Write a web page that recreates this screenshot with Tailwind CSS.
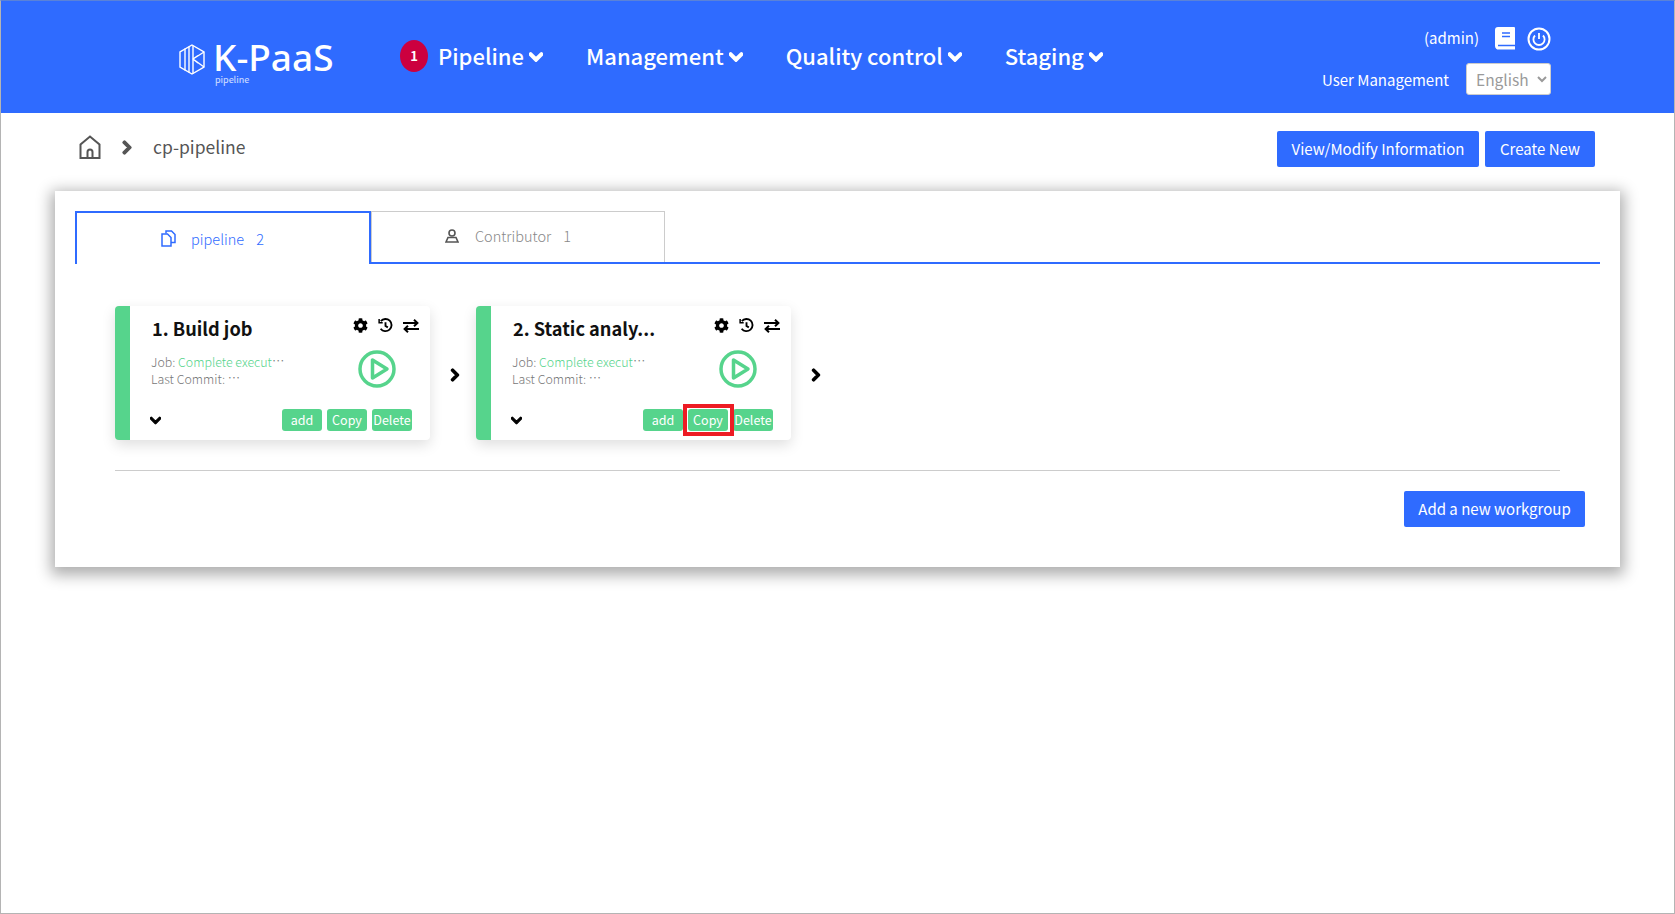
<!DOCTYPE html>
<html lang="en">
<head>
<meta charset="utf-8">
<title>K-PaaS pipeline</title>
<script src="https://cdn.jsdelivr.net/npm/@tailwindcss/browser@4"></script>
</head>
<body class="bg-white">
<div class="w-[1675px] h-[914px] border border-[#b4b4b4] border-t-[#5a82d8] bg-white overflow-hidden font-['Noto_Sans_CJK_KR','Noto_Sans',sans-serif] text-[#555]">
  <header class="h-[112px] bg-[#2f6bff] flex items-center text-white">
    <div class="w-[399px] pl-[178px] flex items-center shrink-0">
      <svg class="w-[26px] h-[31px] mt-[4px]" viewBox="0 0 26 31" fill="none" stroke="white" stroke-width="1.4"><path d="M13 1 L25 8 V23 L13 30 L1 23 V8 Z"/><path d="M6 4.5 V26.5 M10 2.5 V28.5 M14 1.5 V29.5 M14 15 L25 8 M14 15 L25 23 M19 11.5 L14 15 L19 19"/></svg>
      <div class="ml-[8px] flex flex-col mt-[10px]">
        <span class="text-[37px] leading-[36px] font-medium font-['Noto_Sans',sans-serif]">K-PaaS</span>
        <span class="text-[9px] leading-[10px] text-white/80 pl-[2px]">pipeline</span>
      </div>
    </div>
    <nav class="flex items-center text-[22px] leading-[32px] font-medium -mt-[5px]">
      <span class="w-[28px] h-[32px] rounded-[50%] bg-[#cc003f] text-[13px] font-bold flex items-center justify-center mr-[10px] mt-[2px]">1</span>
      <span class="flex items-center">Pipeline<svg class="w-[14px] h-[16px] ml-[5px] mt-[4px]" viewBox="0 0 448 512" fill="white" stroke="white" stroke-width="50"><path d="M207.029 381.476L12.686 187.132c-9.373-9.373-9.373-24.569 0-33.941l22.667-22.667c9.357-9.357 24.522-9.375 33.901-.04L224 284.505l154.745-154.021c9.379-9.335 24.544-9.317 33.901.04l22.667 22.667c9.373 9.373 9.373 24.569 0 33.941L240.971 381.476c-9.373 9.372-24.569 9.372-33.942 0z"/></svg></span>
      <span class="flex items-center ml-[43px]">Management<svg class="w-[14px] h-[16px] ml-[5px] mt-[4px]" viewBox="0 0 448 512" fill="white" stroke="white" stroke-width="50"><path d="M207.029 381.476L12.686 187.132c-9.373-9.373-9.373-24.569 0-33.941l22.667-22.667c9.357-9.357 24.522-9.375 33.901-.04L224 284.505l154.745-154.021c9.379-9.335 24.544-9.317 33.901.04l22.667 22.667c9.373 9.373 9.373 24.569 0 33.941L240.971 381.476c-9.373 9.372-24.569 9.372-33.942 0z"/></svg></span>
      <span class="flex items-center ml-[43px]">Quality control<svg class="w-[14px] h-[16px] ml-[5px] mt-[4px]" viewBox="0 0 448 512" fill="white" stroke="white" stroke-width="50"><path d="M207.029 381.476L12.686 187.132c-9.373-9.373-9.373-24.569 0-33.941l22.667-22.667c9.357-9.357 24.522-9.375 33.901-.04L224 284.505l154.745-154.021c9.379-9.335 24.544-9.317 33.901.04l22.667 22.667c9.373 9.373 9.373 24.569 0 33.941L240.971 381.476c-9.373 9.372-24.569 9.372-33.942 0z"/></svg></span>
      <span class="flex items-center ml-[43px]">Staging<svg class="w-[14px] h-[16px] ml-[5px] mt-[4px]" viewBox="0 0 448 512" fill="white" stroke="white" stroke-width="50"><path d="M207.029 381.476L12.686 187.132c-9.373-9.373-9.373-24.569 0-33.941l22.667-22.667c9.357-9.357 24.522-9.375 33.901-.04L224 284.505l154.745-154.021c9.379-9.335 24.544-9.317 33.901.04l22.667 22.667c9.373 9.373 9.373 24.569 0 33.941L240.971 381.476c-9.373 9.372-24.569 9.372-33.942 0z"/></svg></span>
    </nav>
    <div class="ml-auto mr-[123px] flex flex-col items-end gap-[9px] text-[15px] mt-[4px]">
      <div class="flex items-center h-[30px]">
        <span>(admin)</span>
        <svg class="w-[20px] h-[23px] ml-[16px]" viewBox="0 0 20 23"><path fill="white" d="M3 0 H19 a1 1 0 0 1 1 1 V22.5 H4 a3.5 3.5 0 0 1 -4 -3.5 V3 a3 3 0 0 1 3 -3z"/><path stroke="#2f6bff" stroke-width="1.4" d="M7 6 H15 M7 9.5 H15 M3 18.5 H20"/></svg>
        <svg class="w-[24px] h-[24px] ml-[12px]" viewBox="0 0 24 24" fill="none" stroke="white" stroke-width="2"><circle cx="12" cy="12" r="10.5"/><path d="M8 8.5 a5.6 5.6 0 1 0 8 0 M12 6 V12" stroke-width="1.8"/></svg>
      </div>
      <div class="flex items-center">
        <span class="mt-[3px]">User Management</span>
        <select class="ml-[17px] w-[85px] h-[32px] bg-white text-[#9a9a9a] border border-[#ccc] rounded-[3px] pl-[5px] text-[15.5px]"><option>English</option></select>
      </div>
    </div>
  </header>

  <div class="flex items-center h-[68px] pl-[78px] pr-[79px]">
    <svg class="w-[22px] h-[24px]" viewBox="0 0 22 24" fill="none" stroke="#555" stroke-width="2"><path d="M1.5 23 V9.5 L11 1.5 L20.5 9.5 V23 Z"/><path d="M8.5 23 V17 a2.5 2.5 0 0 1 5 0 V23"/></svg>
    <svg class="w-[10px] h-[15px] ml-[21px]" viewBox="0 0 320 512" fill="#555" stroke="#555" stroke-width="50"><path d="M285.476 272.971L91.132 467.314c-9.373 9.373-24.569 9.373-33.941 0l-22.667-22.667c-9.357-9.357-9.375-24.522-.04-33.901L188.505 256 34.484 101.255c-9.335-9.379-9.317-24.544.04-33.901l22.667-22.667c9.373-9.373 24.569-9.373 33.941 0L285.475 239.03c9.373 9.372 9.373 24.568.001 33.941z"/></svg>
    <span class="ml-[21px] text-[17.5px]">cp-pipeline</span>
    <div class="ml-auto flex gap-[6px] mt-[4px]">
      <button class="h-[36px] w-[202px] bg-[#2f6bff] text-white rounded-[2px] text-[15px]">View/Modify Information</button>
      <button class="h-[36px] w-[110px] bg-[#2f6bff] text-white rounded-[2px] text-[15px]">Create New</button>
    </div>
  </div>

  <main class="mx-[54px] mt-[10px] h-[376px] bg-white shadow-[0_4px_14px_4px_rgba(0,0,0,0.32)] px-[20px] pt-[20px]">
    <div class="flex items-end w-[1525px] border-b-2 border-[#2f6bff] h-[53px]">
      <div class="w-[296px] h-[53px] -mb-[2px] bg-white border-2 border-b-0 border-[#2f6bff] flex items-center justify-center text-[#2f6bff] text-[14.5px] font-light relative z-10 pr-[21px]">
        <svg class="w-[15px] h-[17px] mr-[15px]" viewBox="0 0 15 17" fill="none" stroke="#2f6bff" stroke-width="1.5"><path d="M5 3.5 V1 H10.5 L14 4.5 V12.5 H10"/><path d="M1 4 H6.5 L10 7.5 V16 H1 Z"/></svg>
        <span>pipeline</span><span class="ml-[12px]">2</span>
      </div>
      <div class="w-[294px] h-[51px] border border-b-0 border-[#ccc] flex items-center justify-center text-[#888] text-[14.5px] font-light pr-[20px] pb-[2px]">
        <svg class="w-[14px] h-[14px] mr-[16px]" viewBox="0 0 14 14" fill="none" stroke="#555" stroke-width="1.6"><circle cx="7" cy="4" r="3"/><path d="M1 13 L3 8.5 H11 L13 13 Z"/></svg>
        <span>Contributor</span><span class="ml-[12px]">1</span>
      </div>
    </div>

    <div class="flex items-center pl-[40px] mt-[42px]">
      <article class="w-[315px] h-[134px] rounded-[4px] bg-white border-l-[15px] border-[#56d48c] shadow-[0_5px_14px_rgba(0,0,0,0.13)] flex flex-col pl-[22px] pr-[11px]">
        <div class="flex justify-between items-start mt-[8px]">
          <h3 class="text-[18.2px] leading-[28px] font-bold text-[#111]">1. Build job</h3>
          <div class="flex items-center gap-[10px] mt-[4px] text-black">
            <svg class="w-[15px] h-[15px]" viewBox="0 0 512 512" fill="black"><path d="M487.4 315.7l-42.6-24.6c4.3-23.2 4.3-47 0-70.2l42.6-24.6c4.9-2.8 7.1-8.6 5.5-14-11.1-35.6-30-67.8-54.7-94.6-3.8-4.1-10-5.1-14.8-2.3L380.8 110c-17.9-15.4-38.5-27.3-60.8-35.1V25.8c0-5.6-3.9-10.5-9.4-11.7-36.7-8.2-74.3-7.8-109.2 0-5.5 1.2-9.4 6.1-9.4 11.7V75c-22.2 7.9-42.8 19.8-60.8 35.1L88.7 85.5c-4.9-2.8-11-1.9-14.8 2.3-24.7 26.7-43.6 58.9-54.7 94.6-1.7 5.4.6 11.2 5.5 14L67.3 221c-4.3 23.2-4.3 47 0 70.2l-42.6 24.6c-4.9 2.8-7.1 8.6-5.5 14 11.1 35.6 30 67.8 54.7 94.6 3.8 4.1 10 5.1 14.8 2.3l42.6-24.6c17.9 15.4 38.5 27.3 60.8 35.1v49.2c0 5.6 3.9 10.5 9.4 11.7 36.7 8.2 74.3 7.8 109.2 0 5.5-1.2 9.4-6.1 9.4-11.7v-49.2c22.2-7.9 42.8-19.8 60.8-35.1l42.6 24.6c4.9 2.8 11 1.9 14.8-2.3 24.7-26.7 43.6-58.9 54.7-94.6 1.5-5.5-.7-11.3-5.6-14.1zM256 336c-44.1 0-80-35.9-80-80s35.9-80 80-80 80 35.9 80 80-35.9 80-80 80z"/></svg>
            <svg class="w-[15px] h-[15px]" viewBox="0 0 16 16" fill="none" stroke="black" stroke-width="2"><path d="M2.8 11.5 A6.5 6.5 0 1 0 3 3.3"/><path d="M8 4.5 V8.5 L10.5 10"/><path d="M1.2 1 V5 H5" stroke-width="1.6"/></svg>
            <svg class="w-[16px] h-[14px]" viewBox="0 0 16 14" fill="none" stroke="black" stroke-width="2"><path d="M0 4 H14 M11 .8 L14.4 4 L11 7.2"/><path d="M16 10 H2 M5 6.8 L1.6 10 L5 13.2"/></svg>
          </div>
        </div>
        <div class="flex justify-between items-start">
          <div class="text-[12.4px] leading-[17px] text-[#777] font-light mt-[12px] -ml-[1px]">
            <p>Job: <span class="text-[#56d48c]">Complete execut</span><span class="inline-block -translate-y-[1px]">⋯</span></p>
            <p>Last Commit: <span class="inline-block -translate-y-[1px]">⋯</span></p>
          </div>
          <svg class="w-[38px] h-[38px] mr-[23px] mt-[8px]" viewBox="0 0 38 38" fill="none" stroke="#56d48c" stroke-width="3.5"><circle cx="19" cy="19" r="17"/><path d="M14.5 10 V28 L29 19 Z" stroke-linejoin="round"/></svg>
        </div>
        <div class="flex items-center mt-auto mb-[9px] pr-[7px] -ml-[2px]">
          <svg class="w-[11px] h-[13px]" viewBox="0 0 448 512" fill="black" stroke="black" stroke-width="50"><path d="M207.029 381.476L12.686 187.132c-9.373-9.373-9.373-24.569 0-33.941l22.667-22.667c9.357-9.357 24.522-9.375 33.901-.04L224 284.505l154.745-154.021c9.379-9.335 24.544-9.317 33.901.04l22.667 22.667c9.373 9.373 9.373 24.569 0 33.941L240.971 381.476c-9.373 9.372-24.569 9.372-33.942 0z"/></svg>
          <div class="ml-auto flex gap-[5px] text-white text-[12.5px]">
            <button class="w-[40px] h-[22px] bg-[#56d48c] rounded-[3px]">add</button>
            <button class="w-[40px] h-[22px] bg-[#56d48c] rounded-[3px]">Copy</button>
            <button class="w-[40px] h-[22px] bg-[#56d48c] rounded-[3px] whitespace-nowrap">Delete</button>
          </div>
        </div>
      </article>
      <svg class="w-[10px] h-[14px] ml-[20px] mr-[16px] mt-[4px] shrink-0" viewBox="0 0 320 512" fill="black" stroke="black" stroke-width="50"><path d="M285.476 272.971L91.132 467.314c-9.373 9.373-24.569 9.373-33.941 0l-22.667-22.667c-9.357-9.357-9.375-24.522-.04-33.901L188.505 256 34.484 101.255c-9.335-9.379-9.317-24.544.04-33.901l22.667-22.667c9.373-9.373 24.569-9.373 33.941 0L285.475 239.03c9.373 9.372 9.373 24.568.001 33.941z"/></svg>
      <article class="w-[315px] h-[134px] rounded-[4px] bg-white border-l-[15px] border-[#56d48c] shadow-[0_5px_14px_rgba(0,0,0,0.13)] flex flex-col pl-[22px] pr-[11px]">
        <div class="flex justify-between items-start mt-[8px]">
          <h3 class="text-[18.2px] leading-[28px] font-bold text-[#111]">2. Static analy...</h3>
          <div class="flex items-center gap-[10px] mt-[4px] text-black">
            <svg class="w-[15px] h-[15px]" viewBox="0 0 512 512" fill="black"><path d="M487.4 315.7l-42.6-24.6c4.3-23.2 4.3-47 0-70.2l42.6-24.6c4.9-2.8 7.1-8.6 5.5-14-11.1-35.6-30-67.8-54.7-94.6-3.8-4.1-10-5.1-14.8-2.3L380.8 110c-17.9-15.4-38.5-27.3-60.8-35.1V25.8c0-5.6-3.9-10.5-9.4-11.7-36.7-8.2-74.3-7.8-109.2 0-5.5 1.2-9.4 6.1-9.4 11.7V75c-22.2 7.9-42.8 19.8-60.8 35.1L88.7 85.5c-4.9-2.8-11-1.9-14.8 2.3-24.7 26.7-43.6 58.9-54.7 94.6-1.7 5.4.6 11.2 5.5 14L67.3 221c-4.3 23.2-4.3 47 0 70.2l-42.6 24.6c-4.9 2.8-7.1 8.6-5.5 14 11.1 35.6 30 67.8 54.7 94.6 3.8 4.1 10 5.1 14.8 2.3l42.6-24.6c17.9 15.4 38.5 27.3 60.8 35.1v49.2c0 5.6 3.9 10.5 9.4 11.7 36.7 8.2 74.3 7.8 109.2 0 5.5-1.2 9.4-6.1 9.4-11.7v-49.2c22.2-7.9 42.8-19.8 60.8-35.1l42.6 24.6c4.9 2.8 11 1.9 14.8-2.3 24.7-26.7 43.6-58.9 54.7-94.6 1.5-5.5-.7-11.3-5.6-14.1zM256 336c-44.1 0-80-35.9-80-80s35.9-80 80-80 80 35.9 80 80-35.9 80-80 80z"/></svg>
            <svg class="w-[15px] h-[15px]" viewBox="0 0 16 16" fill="none" stroke="black" stroke-width="2"><path d="M2.8 11.5 A6.5 6.5 0 1 0 3 3.3"/><path d="M8 4.5 V8.5 L10.5 10"/><path d="M1.2 1 V5 H5" stroke-width="1.6"/></svg>
            <svg class="w-[16px] h-[14px]" viewBox="0 0 16 14" fill="none" stroke="black" stroke-width="2"><path d="M0 4 H14 M11 .8 L14.4 4 L11 7.2"/><path d="M16 10 H2 M5 6.8 L1.6 10 L5 13.2"/></svg>
          </div>
        </div>
        <div class="flex justify-between items-start">
          <div class="text-[12.4px] leading-[17px] text-[#777] font-light mt-[12px] -ml-[1px]">
            <p>Job: <span class="text-[#56d48c]">Complete execut</span><span class="inline-block -translate-y-[1px]">⋯</span></p>
            <p>Last Commit: <span class="inline-block -translate-y-[1px]">⋯</span></p>
          </div>
          <svg class="w-[38px] h-[38px] mr-[23px] mt-[8px]" viewBox="0 0 38 38" fill="none" stroke="#56d48c" stroke-width="3.5"><circle cx="19" cy="19" r="17"/><path d="M14.5 10 V28 L29 19 Z" stroke-linejoin="round"/></svg>
        </div>
        <div class="flex items-center mt-auto mb-[9px] pr-[7px] -ml-[2px]">
          <svg class="w-[11px] h-[13px]" viewBox="0 0 448 512" fill="black" stroke="black" stroke-width="50"><path d="M207.029 381.476L12.686 187.132c-9.373-9.373-9.373-24.569 0-33.941l22.667-22.667c9.357-9.357 24.522-9.375 33.901-.04L224 284.505l154.745-154.021c9.379-9.335 24.544-9.317 33.901.04l22.667 22.667c9.373 9.373 9.373 24.569 0 33.941L240.971 381.476c-9.373 9.372-24.569 9.372-33.942 0z"/></svg>
          <div class="ml-auto flex gap-[5px] text-white text-[12.5px]">
            <button class="w-[40px] h-[22px] bg-[#56d48c] rounded-[3px]">add</button>
            <button class="w-[40px] h-[22px] bg-[#56d48c] rounded-[3px] relative">Copy<span class="absolute -top-[5px] -bottom-[5px] -left-[5px] -right-[6px] border-4 border-[#ed1c24] shadow-[inset_0_0_0_1px_white]"></span></button>
            <button class="w-[40px] h-[22px] bg-[#56d48c] rounded-[3px] whitespace-nowrap">Delete</button>
          </div>
        </div>
      </article>
      <svg class="w-[10px] h-[14px] ml-[20px] mt-[4px] shrink-0" viewBox="0 0 320 512" fill="black" stroke="black" stroke-width="50"><path d="M285.476 272.971L91.132 467.314c-9.373 9.373-24.569 9.373-33.941 0l-22.667-22.667c-9.357-9.357-9.375-24.522-.04-33.901L188.505 256 34.484 101.255c-9.335-9.379-9.317-24.544.04-33.901l22.667-22.667c9.373-9.373 24.569-9.373 33.941 0L285.475 239.03c9.373 9.372 9.373 24.568.001 33.941z"/></svg>
    </div>

    <div class="ml-[40px] w-[1445px] border-t border-[#ccc] mt-[30px]"></div>
    <div class="flex justify-end w-[1510px] mt-[20px]">
      <button class="h-[36px] w-[181px] bg-[#2f6bff] text-white rounded-[2px] text-[15px]">Add a new workgroup</button>
    </div>
  </main>
</div>
</body>
</html>
